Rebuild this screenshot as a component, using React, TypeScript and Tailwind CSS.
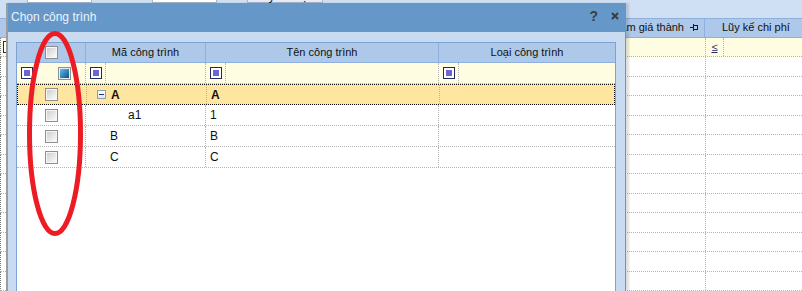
import React from "react";

function GrayCheck() {
  return (
    <div className="w-[13px] h-[13px] border border-[#8f8f8f] p-px bg-[#f6f6f6]">
      <div className="w-full h-full bg-gradient-to-br from-[#cfcfcf] to-[#fbfbfb]" />
    </div>
  );
}

function BlueCheck() {
  return (
    <div className="w-[13px] h-[13px] border border-[#8f8f8f] p-px bg-[#e8eef5]">
      <div className="w-full h-full bg-gradient-to-br from-[#63c1ef] to-[#0a4f86]" />
    </div>
  );
}

function FilterIcon() {
  return (
    <div className="w-[12px] h-[12px] border border-[#26295e] bg-white flex items-center justify-center shrink-0">
      <div className="w-[6px] h-[6px] bg-[#6b63d6]" />
    </div>
  );
}

function MinusBox() {
  return (
    <div className="w-[9px] h-[9px] border border-[#8d9fb6] bg-gradient-to-b from-white to-[#dfe6ef] flex items-center justify-center">
      <div className="w-[5px] h-px bg-[#22356e]" />
    </div>
  );
}

function PinIcon() {
  return (
    <svg width="9" height="7" viewBox="0 0 9 7" className="shrink-0">
      <line x1="0" y1="3.5" x2="3" y2="3.5" stroke="#1a1a1a" strokeWidth="1" />
      <rect x="3.5" y="1.5" width="4" height="4" fill="none" stroke="#1a1a1a" strokeWidth="1" />
      <line x1="3.5" y1="0" x2="3.5" y2="7" stroke="#1a1a1a" strokeWidth="1" />
    </svg>
  );
}

const rowCols = "grid grid-cols-[69px_120px_233px_1fr]";

export default function App() {
  const bgRows = Array.from({ length: 12 });
  return (
    <div className="relative w-[802px] h-[291px] overflow-hidden bg-[#d0e0f4] font-['Liberation_Sans',Arial,sans-serif] text-[11px] text-[#111]">
      {/* Background application */}
      <div className="flex flex-col w-full h-full">
        <div className="h-[18px] relative overflow-hidden">
          <div className="flex items-center h-[14px] -mt-[11px] text-[12px]">
            <span className="w-[27px] pl-px">Từ</span>
            <div className="w-[65px] h-[14px] bg-white border border-[#a8b8cc] pl-[3px] leading-[12px]">01/01/2016</div>
            <span className="ml-[21px] w-[39px]">Đến</span>
            <div className="w-[65px] h-[14px] bg-white border border-[#a8b8cc] pl-[3px] leading-[12px]">31/12/2016</div>
            <div className="ml-[30px] w-[76px] h-[14px] bg-[#e4ebf4] border border-[#a8b8cc] text-center leading-[12px]">Lấy dữ liệu</div>
          </div>
        </div>
        <div className="grid grid-cols-[705px_1fr] h-[21px] bg-[#adc8e8] border-y border-[#8db0dc]">
          <div className="flex items-center justify-end gap-[6px] pr-[5px] border-r border-[#8db0dc]">
            <span>Giảm giá thành</span>
            <PinIcon />
          </div>
          <div className="flex items-center pl-[17px]">Lũy kế chi phí</div>
        </div>
        <div className="grid grid-cols-[705px_1fr] h-[20px] bg-[#fffde1] border-b border-dotted border-[#b5b5b5] border-l border-l-[#7a7a7a]">
          <div className="flex items-center pl-[2px] border-r border-dotted border-[#b5b5b5]">
            <FilterIcon />
          </div>
          <div className="flex items-center">
            <div className="w-[18px] h-full flex items-center justify-center border-r border-dotted border-[#b5b5b5]">
              <span className="underline text-[#23236a] leading-none">≤</span>
            </div>
          </div>
        </div>
        {bgRows.map((_, i) => (
          <div
            key={i}
            className="grid grid-cols-[705px_1fr] h-[20px] bg-white border-b border-dotted border-[#b5b5b5] border-l border-l-[#7a7a7a]"
          >
            <div className="border-r border-dotted border-[#b5b5b5]" />
            <div />
          </div>
        ))}
      </div>

      {/* Dialog window */}
      <div className="absolute left-[6px] top-[3px] bottom-0 w-[620px] flex flex-col border-l-2 border-l-[#9c9c9c] border-r border-r-[#6a95c8] shadow-[3px_0_2px_rgba(0,0,0,0.13)]">
        <div className="h-[29px] shrink-0 bg-[#6597c9] flex items-center justify-between pl-[3px] pr-[6px]">
          <span className="text-[12px] text-[#eef3fa] -mt-[1px]">Chọn công trình</span>
          <div className="flex items-center gap-[13px] -mt-[3px]">
            <span className="text-[14px] font-bold text-[#3d3d3d] leading-none">?</span>
            <svg width="8" height="8" viewBox="0 0 8 8">
              <path d="M1 1 L7 7 M7 1 L1 7" stroke="#3d3d3d" strokeWidth="2" />
            </svg>
          </div>
        </div>
        <div className="flex-1 bg-[#c9dbf1] pl-[8px] pr-[9px] pt-[10px] flex flex-col">
          <div className="flex-1 flex flex-col bg-white border-x border-t border-[#7da3d5]">
            {/* header */}
            <div className={`${rowCols} h-[20px] bg-[#adc8e8] border-b border-[#8db0dc]`}>
              <div className="flex items-center justify-center border-r border-[#8db0dc]">
                <GrayCheck />
              </div>
              <div className="flex items-center justify-center border-r border-[#8db0dc]">Mã công trình</div>
              <div className="flex items-center justify-center border-r border-[#8db0dc]">Tên công trình</div>
              <div className="flex items-center justify-center">Loại công trình</div>
            </div>
            {/* filter row */}
            <div className={`${rowCols} h-[21px] bg-[#fffde1] border-b border-dotted border-[#b5b5b5]`}>
              <div className="flex items-center pl-[4px] border-r border-dotted border-[#b5b5b5]">
                <FilterIcon />
                <div className="ml-[25px]">
                  <BlueCheck />
                </div>
              </div>
              {[0, 1, 2].map((k) => (
                <div key={k} className={`flex items-center ${k < 2 ? "border-r border-dotted border-[#b5b5b5]" : ""}`}>
                  <div className="h-full flex items-center pl-[4px] pr-[3px] border-r border-dotted border-[#b5b5b5]">
                    <FilterIcon />
                  </div>
                </div>
              ))}
            </div>
            {/* row A (focused) */}
            <div className={`${rowCols} h-[21px] bg-[#fee6a0] border border-dotted border-[#111]`}>
              <div className="flex items-center justify-center -ml-px border-r border-dotted border-[#b5b5b5]">
                <GrayCheck />
              </div>
              <div className="flex items-center pl-[10px] gap-[5px] border-r border-dotted border-[#b5b5b5]">
                <MinusBox />
                <span className="font-bold text-[12px]">A</span>
              </div>
              <div className="flex items-center pl-[4px] border-r border-dotted border-[#b5b5b5]">
                <span className="font-bold text-[12px]">A</span>
              </div>
              <div />
            </div>
            {[
              { code: "a1", name: "1", indent: "pl-[42px]" },
              { code: "B", name: "B", indent: "pl-[24px]" },
              { code: "C", name: "C", indent: "pl-[24px]" },
            ].map((r) => (
              <div key={r.code} className={`${rowCols} h-[21px] bg-white border-b border-dotted border-[#b5b5b5]`}>
                <div className="flex items-center justify-center border-r border-dotted border-[#b5b5b5]">
                  <GrayCheck />
                </div>
                <div className={`flex items-center ${r.indent} border-r border-dotted border-[#b5b5b5] text-[12px]`}>{r.code}</div>
                <div className="flex items-center pl-[4px] border-r border-dotted border-[#b5b5b5] text-[12px]">{r.name}</div>
                <div />
              </div>
            ))}
          </div>
        </div>
      </div>

      {/* Red hand-drawn ellipse */}
      <svg className="absolute left-0 top-0 pointer-events-none" width="802" height="291">
        <ellipse cx="55" cy="133.5" rx="25.5" ry="100" fill="none" stroke="#ed1c24" strokeWidth="5" />
      </svg>
    </div>
  );
}
